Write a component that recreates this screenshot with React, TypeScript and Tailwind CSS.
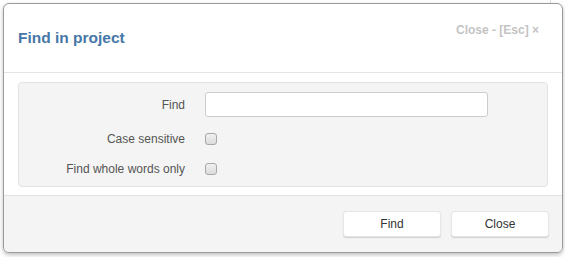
import React from 'react';

const Checkbox = () => (
  <div className="w-[12px] h-[12px] rounded-[3px] border border-[#a8a8a8] bg-gradient-to-b from-[#f0f0f0] to-[#dcdcdc]" />
);

export default function App() {
  const font = "font-['Liberation_Sans',Arial,sans-serif]";
  return (
    <div className={`w-[565px] h-[257px] bg-white relative overflow-hidden ${font}`}>
      {/* page behind the dialog */}
      <div className="absolute left-[550px] top-0 w-px h-[4px] bg-[#dcdcdc]" />

      <div className="relative ml-[3px] mt-[3px] w-[560px] h-[250px] flex flex-col bg-white border border-[#9a9a9a] rounded-[6px] overflow-hidden shadow-[0_2px_4px_rgba(0,0,0,0.25)]">
        {/* header */}
        <div className="relative h-[69px] shrink-0 flex items-center pl-[14px] border-b border-[#e5e5e5]">
          <h3 className="text-[15.5px] font-bold text-[#4777a7] leading-[18px]">Find in project</h3>
          <span className="absolute right-[23px] top-[19px] text-[12px] leading-[14px] font-bold text-[#c4c4c4]">
            Close - [Esc] ×
          </span>
        </div>

        {/* body */}
        <div className="px-[14px] pt-[9px] pb-[8px] shrink-0">
          <div className="h-[105px] rounded-[4px] border border-[#e3e3e3] bg-[#f4f4f4] pt-[9px] flex flex-col text-[12px] text-[#555]">
            <div className="flex items-center h-[25px]">
              <label className="w-[166px] text-right">Find</label>
              <input
                type="text"
                className="ml-[20px] w-[283px] h-[25px] rounded-[3px] border border-[#cccccc] bg-white outline-none px-2"
              />
            </div>
            <div className="flex items-center h-[20px] mt-[12px]">
              <label className="w-[166px] text-right">Case sensitive</label>
              <div className="ml-[20px]"><Checkbox /></div>
            </div>
            <div className="flex items-center h-[20px] mt-[10px]">
              <label className="w-[166px] text-right">Find whole words only</label>
              <div className="ml-[20px]"><Checkbox /></div>
            </div>
          </div>
        </div>

        {/* footer */}
        <div className="flex-1 border-t border-[#e2e2e2] bg-[#f4f4f4] flex justify-end items-start pt-[15px] pr-[13px] gap-[10px]">
          <button className="w-[98px] h-[26px] rounded-[3px] bg-white border border-[#e6e6e6] shadow-[0_1px_1px_rgba(0,0,0,0.15)] text-[12px] text-[#333]">
            Find
          </button>
          <button className="w-[98px] h-[26px] rounded-[3px] bg-white border border-[#e6e6e6] shadow-[0_1px_1px_rgba(0,0,0,0.15)] text-[12px] text-[#333]">
            Close
          </button>
        </div>
      </div>
    </div>
  );
}
